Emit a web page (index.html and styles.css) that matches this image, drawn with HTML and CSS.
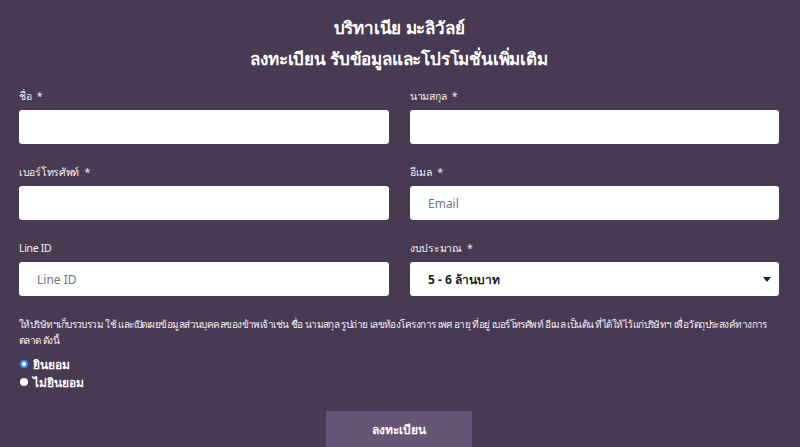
FILE: index.html
```html
<!DOCTYPE html>
<html lang="th">
<head>
<meta charset="utf-8">
<title>ลงทะเบียน</title>
<link rel="stylesheet" href="styles.css">
</head>
<body>
<main class="page">
  <h1 class="title">บริทาเนีย มะลิวัลย์<br>ลงทะเบียน รับข้อมูลและโปรโมชั่นเพิ่มเติม</h1>
  <form class="form">
    <div class="grid">
      <div class="field">
        <label class="label">ชื่อ <span class="req">*</span></label>
        <div class="input"></div>
      </div>
      <div class="field">
        <label class="label">นามสกุล <span class="req">*</span></label>
        <div class="input"></div>
      </div>
      <div class="field">
        <label class="label">เบอร์โทรศัพท์ <span class="req">*</span></label>
        <div class="input"></div>
      </div>
      <div class="field">
        <label class="label">อีเมล <span class="req">*</span></label>
        <div class="input"><span class="ph">Email</span></div>
      </div>
      <div class="field">
        <label class="label">Line ID</label>
        <div class="input"><span class="ph">Line ID</span></div>
      </div>
      <div class="field">
        <label class="label">งบประมาณ <span class="req">*</span></label>
        <div class="input select"><span class="val">5 - 6 ล้านบาท</span><span class="caret"></span></div>
      </div>
    </div>
    <p class="consent">ให้บริษัทฯเก็บรวบรวม ใช้ และเปิดเผยข้อมูลส่วนบุคคลของข้าพเจ้าเช่น ชื่อ นามสกุล รูปถ่าย เลขห้องโครงการ เพศ อายุ ที่อยู่ เบอร์โทรศัพท์ อีเมล เป็นต้น ที่ได้ให้ไว้แก่บริษัทฯ เพื่อวัตถุประสงค์ทางการ<br>ตลาด ดังนี้</p>
    <div class="radios">
      <div class="radio"><span class="dot checked"></span><span class="rtext">ยินยอม</span></div>
      <div class="radio"><span class="dot"></span><span class="rtext">ไม่ยินยอม</span></div>
    </div>
    <div class="actions"><button type="button" class="submit">ลงทะเบียน</button></div>
  </form>
</main>
</body>
</html>
```
FILE: styles.css
```css
* { box-sizing: border-box; }
html, body { margin: 0; height: 100%; }
body {
  background: #473a52;
  color: #fff;
  font-family: "Noto Sans", "Liberation Sans", sans-serif;
  overflow: hidden;
}
.page { padding: 12px 21px 0 19px; }
.title {
  margin: 0;
  text-align: center;
  font-size: 17px;
  line-height: 31px;
  font-weight: 700;
  letter-spacing: -0.2px;
}
.form { margin-top: 15px; }
.grid {
  display: grid;
  grid-template-columns: 370px 369px;
  column-gap: 21px;
  row-gap: 21px;
}
.field { display: flex; flex-direction: column; }
.label {
  height: 14px;
  font-size: 10.5px;
  line-height: 14px;
  margin-bottom: 7px;
  color: #f2eef4;
  letter-spacing: -0.3px;
  white-space: nowrap;
}
.req { margin-left: 3px; }
.input {
  height: 34px;
  background: #fff;
  border-radius: 3px;
  display: flex;
  align-items: center;
  padding: 0 18px;
}
.ph { color: #707780; font-size: 12px; }
.select { justify-content: space-between; padding-right: 8px; }
.val { color: #1e1e1e; font-size: 12px; font-weight: 700; }
.caret {
  width: 0; height: 0;
  border-left: 4px solid transparent;
  border-right: 4px solid transparent;
  border-top: 5px solid #222;
}
.consent {
  margin: 20px 0 0;
  height: 32px;
  font-size: 10px;
  line-height: 16px;
  color: #f2eef4;
  letter-spacing: -0.55px;
  white-space: nowrap;
}
.radios { margin-top: 7px; }
.radio { display: flex; align-items: center; height: 18px; }
.dot {
  width: 8px; height: 8px;
  border-radius: 50%;
  background: #fff;
  margin: 0 5px 0 1px;
}
.dot.checked { border: 2px solid #3d8bfd; background: #fff; }
.rtext { font-size: 12px; font-weight: 700; }
.actions { display: flex; justify-content: center; margin-top: 20px; }
.submit {
  width: 146px;
  height: 40px;
  border: 0;
  background: #675578;
  color: #fff;
  font-family: inherit;
  font-size: 12px;
  font-weight: 700;
  padding: 0 0 4px;
}
```
